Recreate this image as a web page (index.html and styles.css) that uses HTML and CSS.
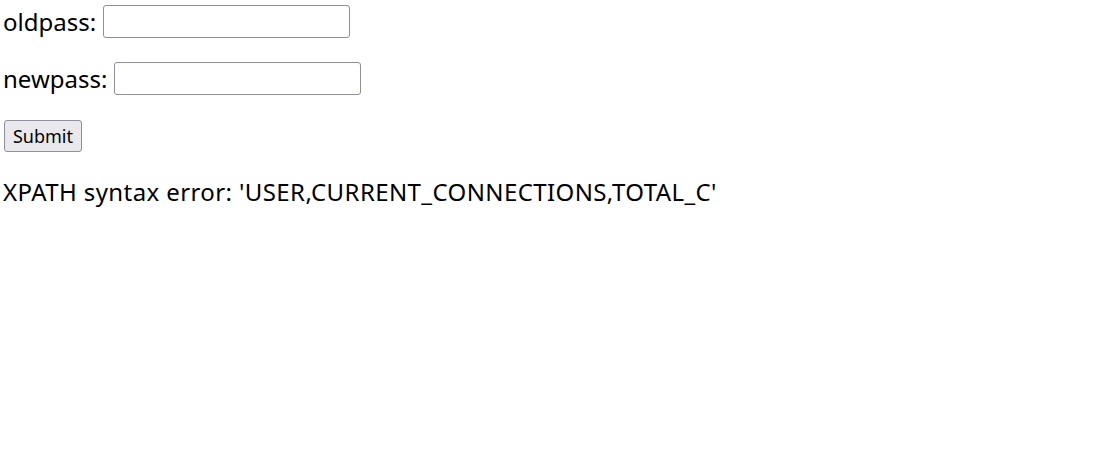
FILE: index.html
```html
<!DOCTYPE html>
<html>
<head>
<meta charset="utf-8">
<link rel="stylesheet" href="styles.css">
</head>
<body>
<form class="form">
  <div class="row"><label class="label">oldpass:</label><input class="field" type="text"></div>
  <div class="row row-second"><label class="label">newpass:</label><input class="field" type="text"></div>
  <div class="row row-button"><button class="submit" type="button">Submit</button></div>
</form>
<p class="error">XPATH syntax error: 'USER,CURRENT_CONNECTIONS,TOTAL_C'</p>
</body>
</html>
```
FILE: styles.css
```css
html, body {
  margin: 0;
  padding: 0;
  background: #fff;
}
body {
  font-family: "Noto Sans", "Open Sans", sans-serif;
  font-size: 24px;
  color: #000;
  padding: 5px 0 0 3px;
}
.form {
  display: flex;
  flex-direction: column;
  align-items: flex-start;
}
.row {
  display: flex;
  align-items: center;
  gap: 7px;
  height: 33px;
}
.row-second {
  margin-top: 24px;
}
.row-button {
  margin-top: 25px;
  height: 32px;
}
.label {
  line-height: 33px;
}
.field {
  box-sizing: border-box;
  width: 247px;
  height: 33px;
  border: 1px solid #8f8f9d;
  border-radius: 3px;
  background: #fff;
  margin: 0;
  padding: 0 4px;
}
.submit {
  box-sizing: border-box;
  height: 32px;
  width: 78px;
  margin: 0 0 0 1px;
  padding: 0;
  font-family: inherit;
  font-size: 18px;
  color: #000;
  background: #e9e9ed;
  border: 1px solid #8f8f9d;
  border-radius: 3px;
}
.error {
  margin: 23px 0 0 0;
  line-height: 33px;
  letter-spacing: 0.4px;
}
```
